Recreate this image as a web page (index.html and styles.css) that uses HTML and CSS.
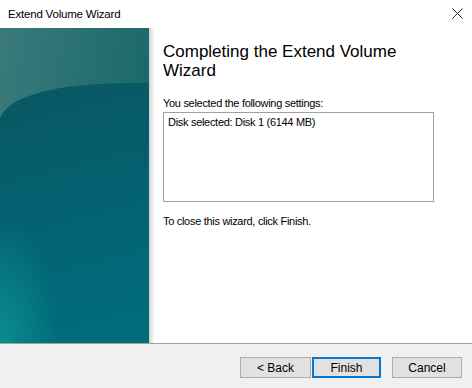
FILE: index.html
```html
<!DOCTYPE html>
<html lang="en">
<head>
    <meta charset="UTF-8">
    <title>Extend Volume Wizard</title>
    <link rel="stylesheet" href="styles.css">
</head>
<body>
    <div class="window">
        <div class="titlebar">
            <span class="title">Extend Volume Wizard</span>
            <svg class="close" width="11" height="11" viewBox="0 0 11 11">
                <path d="M0.5 0.5 L10.5 10.5 M10.5 0.5 L0.5 10.5" stroke="#222" stroke-width="1" fill="none"/>
            </svg>
        </div>

        <div class="body">
            <div class="banner">
                <svg width="149" height="315" viewBox="0 0 149 315" preserveAspectRatio="none">
                    <defs>
                        <linearGradient id="upper" x1="0" y1="0" x2="1" y2="0.3">
                            <stop offset="0" stop-color="#3a7a7b"/>
                            <stop offset="1" stop-color="#1a686b"/>
                        </linearGradient>
                        <linearGradient id="lower" x1="0" y1="0" x2="0.15" y2="1">
                            <stop offset="0" stop-color="#0a5662"/>
                            <stop offset="0.6" stop-color="#036372"/>
                            <stop offset="1" stop-color="#006b7a"/>
                        </linearGradient>
                        <radialGradient id="glow" cx="0" cy="1" r="0.4">
                            <stop offset="0" stop-color="#0c9090" stop-opacity="0.9"/>
                            <stop offset="1" stop-color="#0c9090" stop-opacity="0"/>
                        </radialGradient>
                    </defs>
                    <rect width="149" height="315" fill="url(#upper)"/>
                    <path d="M0 90 C8 72 35 62 85 57 C112 55 134 55 149 55 L149 315 L0 315 Z" fill="url(#lower)"/>
                    <rect width="149" height="315" fill="url(#glow)"/>
                </svg>
            </div>
            <div class="shade"></div>
            <div class="content">
                <h1>Completing the Extend Volume Wizard</h1>
                <p class="label">You selected the following settings:</p>
                <div class="summary">Disk selected: Disk 1 (6144 MB)</div>
                <p class="hint">To close this wizard, click Finish.</p>
            </div>
        </div>

        <div class="footer">
            <button class="btn">&lt; Back</button>
            <button class="btn default">Finish</button>
            <button class="btn cancel">Cancel</button>
        </div>
    </div>
</body>
</html>
```

FILE: styles.css
```css
html, body {
    margin: 0;
    padding: 0;
    background: #ffffff;
}

.window {
    width: 472px;
    height: 388px;
    display: flex;
    flex-direction: column;
    font-family: "Liberation Sans", Arial, sans-serif;
    color: #000000;
    overflow: hidden;
}

.titlebar {
    height: 28px;
    display: flex;
    align-items: center;
    justify-content: space-between;
    padding: 0 9px 0 8px;
    background: #ffffff;
}

.title {
    font-size: 11.5px;
    letter-spacing: -0.2px;
    color: #000000;
}

.close {
    display: block;
    margin-top: -1px;
}

.body {
    height: 315px;
    display: flex;
    background: #ffffff;
}

.banner {
    width: 149px;
    height: 315px;
}

.banner svg {
    display: block;
}

.shade {
    width: 5px;
    background: linear-gradient(to right, #cfcfcf, #e6e6e6 50%, #f8f8f8);
}

.content {
    padding: 14px 0 0 9px;
    width: 271px;
}

h1 {
    margin: 0;
    font-size: 17px;
    font-weight: normal;
    line-height: 19px;
    max-width: 262px;
}

.label {
    margin: 17px 0 2px;
    font-size: 11px;
    line-height: 13px;
    letter-spacing: -0.3px;
}

.summary {
    box-sizing: border-box;
    height: 90px;
    border: 1px solid #a0a0a0;
    padding: 3px 4px;
    font-size: 11px;
    line-height: 13px;
    letter-spacing: -0.3px;
}

.hint {
    margin: 13px 0 0;
    font-size: 11px;
    line-height: 13px;
    letter-spacing: -0.3px;
}

.footer {
    flex: 1;
    border-top: 1px solid #a0a0a0;
    background: #f0f0f0;
    display: flex;
    align-items: flex-start;
    padding: 13px 0 0 240px;
}

.btn {
    box-sizing: border-box;
    width: 71px;
    height: 21px;
    margin: 0;
    padding: 0;
    border: 1px solid #adadad;
    background: #e1e1e1;
    font-family: "Liberation Sans", Arial, sans-serif;
    font-size: 12px;
    color: #000000;
}

.default {
    width: 69px;
    margin-left: 1px;
    border: 2px solid #0078d7;
}

.cancel {
    margin-left: 11px;
    width: 70px;
}
```
